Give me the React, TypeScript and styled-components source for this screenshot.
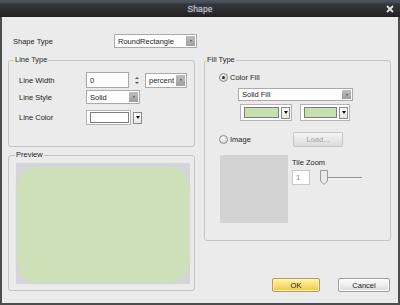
import React from "react";
import styled, { createGlobalStyle } from "styled-components";

const GlobalStyle = createGlobalStyle`
    html, body {
        margin: 0;
        padding: 0;
        background: #ebebeb;
    }
    body {
        font-family: "Liberation Sans", Arial, sans-serif;
        font-size: 7.5px;
        color: #1e1e1e;
    }
`;

const Window = styled.div`
    width: 400px;
    height: 305px;
    display: flex;
    flex-direction: column;
    background: #ebebeb;
`;

const TitleBar = styled.div`
    height: 17px;
    flex: none;
    display: grid;
    grid-template-columns: 1fr auto 1fr;
    align-items: center;
    background: linear-gradient(#4f5460 0, #444852 3px, #34363b 4px, #222224 100%);
`;
const Title = styled.div`
    grid-column: 2;
    font-size: 8.5px;
    color: #d2d8e0;
    letter-spacing: 0.1px;
    text-shadow: 0 0 3px #6c7280;
`;
const CloseButton = styled.div`
    grid-column: 3;
    justify-self: end;
    margin-right: 6px;
    width: 8px;
    height: 8px;
    display: flex;
`;

const Body = styled.div`
    flex: 1;
    box-sizing: border-box;
    border: 2px solid #4d4d4d;
    border-top: none;
    padding: 17px 7px 0 6px;
    display: grid;
    grid-template-columns: 187px 187px;
    grid-template-rows: 14px 1fr;
    column-gap: 9px;
    row-gap: 7px;
`;

const TopRow = styled.div`
    grid-column: 1 / span 2;
    display: flex;
    align-items: center;
`;
const TopLabel = styled.div`
    width: 101px;
    padding-left: 5px;
`;

const Column = styled.div`
    display: flex;
    flex-direction: column;
    gap: 3px;
    min-height: 0;
`;

const GroupBox = styled.fieldset<{ $height: number; $pad: string }>`
    margin: 0;
    min-width: 0;
    box-sizing: border-box;
    height: ${p => p.$height}px;
    border: 1px solid #c4c4c4;
    border-radius: 3px;
    padding: ${p => p.$pad};
`;
const Legend = styled.legend<{ $shift: number }>`
    padding: 0 1px;
    margin-left: ${p => p.$shift}px;
    line-height: 10px;
    font-size: 7.5px;
    color: #1e1e1e;
`;

const FormRow = styled.div<{ $h: number; $top?: number }>`
    display: flex;
    align-items: center;
    height: ${p => p.$h}px;
    margin-top: ${p => p.$top || 0}px;
`;
const FormLabel = styled.div`
    width: 67px;
    flex: none;
`;

const TextBox = styled.div<{ $w: number; $h: number; $muted?: boolean }>`
    box-sizing: border-box;
    width: ${p => p.$w}px;
    height: ${p => p.$h}px;
    background: #fff;
    border: 1px solid ${p => (p.$muted ? "#c8c8c8" : "#a9a9a9")};
    padding-left: 3px;
    display: flex;
    align-items: center;
    color: ${p => (p.$muted ? "#8a8a8a" : "#1e1e1e")};
`;

const Spinner = styled.div`
    width: 16px;
    height: 15px;
    display: flex;
    flex-direction: column;
    align-items: center;
    justify-content: center;
    gap: 3px;
`;
const SpinArrow = styled.div<{ $up?: boolean }>`
    width: 0;
    height: 0;
    border-left: 2px solid transparent;
    border-right: 2px solid transparent;
    ${p => (p.$up ? "border-bottom: 2px solid #555;" : "border-top: 2px solid #555;")}
`;

const ComboBox = styled.div<{ $w: number; $h: number }>`
    box-sizing: border-box;
    width: ${p => p.$w}px;
    height: ${p => p.$h}px;
    background: #fff;
    border: 1px solid #aaaaaa;
    display: flex;
    align-items: stretch;
    padding: 1px;
`;
const ComboText = styled.div`
    flex: 1;
    padding-left: 2px;
    display: flex;
    align-items: center;
    white-space: nowrap;
    overflow: hidden;
`;
const ComboButton = styled.div`
    width: 9px;
    flex: none;
    background: linear-gradient(#bdbdbd, #9f9f9f);
    display: flex;
    align-items: center;
    justify-content: center;
`;
const TinyArrow = styled.div`
    width: 0;
    height: 0;
    border-left: 1.5px solid transparent;
    border-right: 1.5px solid transparent;
    border-top: 2px solid #555;
`;

const ColorFrame = styled.div<{ $w: number; $h: number }>`
    box-sizing: border-box;
    width: ${p => p.$w}px;
    height: ${p => p.$h}px;
    background: #fff;
    border: 1px solid #b4b4b4;
    display: flex;
    align-items: center;
    gap: 2px;
    padding: 0 1px 0 3px;
`;
const Swatch = styled.div<{ $color: string }>`
    flex: 1;
    height: 9px;
    background: ${p => p.$color};
    border: 1px solid #7c7c7c;
`;
const DropButton = styled.div`
    box-sizing: border-box;
    width: 9px;
    height: 12px;
    flex: none;
    background: linear-gradient(#ffffff, #e6e6e6);
    border: 1px solid #8a8a8a;
    display: flex;
    align-items: center;
    justify-content: center;
`;
const BlackArrow = styled.div`
    width: 0;
    height: 0;
    border-left: 2.5px solid transparent;
    border-right: 2.5px solid transparent;
    border-top: 3px solid #111;
`;

const PreviewCanvas = styled.div`
    width: 174px;
    height: 121px;
    background: #d5d4da;
    display: flex;
    padding: 4px 1px 1px 1px;
    box-sizing: border-box;
`;
const PreviewShape = styled.div`
    flex: 1;
    background: #cde0b8;
    border-radius: 20px;
    filter: blur(1.5px);
`;

const RadioRow = styled.div<{ $h: number }>`
    display: flex;
    align-items: center;
    gap: 2px;
    height: ${p => p.$h}px;
`;
const RadioCircle = styled.div<{ $checked?: boolean }>`
    box-sizing: border-box;
    width: 9px;
    height: 9px;
    border-radius: 50%;
    border: 1px solid #8c8c8c;
    background: radial-gradient(circle at 40% 35%, #fafafa, #c9c9c9);
    display: flex;
    align-items: center;
    justify-content: center;
    &::after {
        content: "";
        display: ${p => (p.$checked ? "block" : "none")};
        width: 3px;
        height: 3px;
        border-radius: 50%;
        background: #2a2a2a;
    }
`;

const Indented = styled.div<{ $left: number; $top: number }>`
    margin-left: ${p => p.$left}px;
    margin-top: ${p => p.$top}px;
    display: flex;
    align-items: center;
`;
const ColorRow = styled(Indented)`
    gap: 8px;
    height: 17px;
`;

const ImageRow = styled.div`
    margin-top: 11px;
    display: grid;
    grid-template-columns: 74px auto;
    align-items: center;
    height: 15px;
`;

const LoadButton = styled.div`
    box-sizing: border-box;
    width: 50px;
    height: 15px;
    border: 1px solid #c6c6c6;
    border-radius: 2px;
    background: linear-gradient(#f4f4f4, #dcdcdc);
    color: #a3a3a3;
    display: flex;
    align-items: center;
    justify-content: center;
`;

const TileArea = styled.div`
    margin-top: 8px;
    margin-left: 1px;
    display: flex;
    gap: 4px;
`;
const ImageBox = styled.div`
    width: 68px;
    height: 68px;
    background: #d3d3d3;
`;
const TileControls = styled.div`
    display: flex;
    flex-direction: column;
`;
const TileLabel = styled.div`
    margin-top: 2px;
    height: 11px;
    display: flex;
    align-items: center;
`;
const SliderRow = styled.div`
    margin-top: 2px;
    display: flex;
    align-items: center;
    height: 15px;
`;
const SliderTrack = styled.div`
    width: 34px;
    height: 1px;
    background: #8f8f8f;
    border-bottom: 1px solid #f8f8f8;
`;

const ButtonRow = styled.div`
    margin-top: auto;
    margin-bottom: 11px;
    padding-right: 1px;
    display: flex;
    justify-content: flex-end;
    gap: 18px;
`;
const DialogButton = styled.div<{ $w: number; $primary?: boolean }>`
    box-sizing: border-box;
    width: ${p => p.$w}px;
    height: 14px;
    border-radius: 2px;
    display: flex;
    align-items: center;
    justify-content: center;
    border: 1px solid ${p => (p.$primary ? "#c29a3a" : "#9c9c9c")};
    background: ${p =>
        p.$primary
            ? "linear-gradient(#fff3b8 0%, #fbe07a 45%, #f4c444 100%)"
            : "linear-gradient(#fcfcfc 0%, #eeeeee 50%, #d9d9d9 100%)"};
    box-shadow: inset 0 0 0 1px ${p => (p.$primary ? "#fff6cf" : "#ffffff")};
`;

const Combo = ({ w, h, text }: { w: number; h: number; text: string }) => (
    <ComboBox $w={w} $h={h}>
        <ComboText>{text}</ComboText>
        <ComboButton><TinyArrow /></ComboButton>
    </ComboBox>
);

export default function App() {
    return (
        <Window>
            <GlobalStyle />
            <TitleBar>
                <Title>Shape</Title>
                <CloseButton>
                    <svg width="8" height="8" viewBox="0 0 8 8">
                        <path d="M1 1L7 7M7 1L1 7" stroke="#e2e2e2" strokeWidth="1.8" />
                    </svg>
                </CloseButton>
            </TitleBar>
            <Body>
                <TopRow>
                    <TopLabel>Shape Type</TopLabel>
                    <Combo w={83} h={14} text="RoundRectangle" />
                </TopRow>

                <Column>
                    <GroupBox $height={92} $pad="7px 6px 4px 10px">
                        <Legend $shift={-5}>Line Type</Legend>
                        <FormRow $h={16}>
                            <FormLabel>Line Width</FormLabel>
                            <TextBox $w={43} $h={16}>0</TextBox>
                            <Spinner><SpinArrow $up /><SpinArrow /></Spinner>
                            <Combo w={42} h={15} text="percent" />
                        </FormRow>
                        <FormRow $h={14} $top={2}>
                            <FormLabel>Line Style</FormLabel>
                            <Combo w={54} h={14} text="Solid" />
                        </FormRow>
                        <FormRow $h={15} $top={6}>
                            <FormLabel>Line Color</FormLabel>
                            <ColorFrame $w={45} $h={15}>
                                <Swatch $color="#ffffff" />
                            </ColorFrame>
                            <DropButton style={{ marginLeft: 2 }}><BlackArrow /></DropButton>
                        </FormRow>
                    </GroupBox>

                    <GroupBox $height={141} $pad="3px 4px 4px 7px">
                        <Legend $shift={-1}>Preview</Legend>
                        <PreviewCanvas>
                            <PreviewShape />
                        </PreviewCanvas>
                    </GroupBox>
                </Column>

                <Column>
                    <GroupBox $height={186} $pad="7px 6px 4px 14px">
                        <Legend $shift={-13}>Fill Type</Legend>
                        <RadioRow $h={10}>
                            <RadioCircle $checked />
                            <span>Color Fill</span>
                        </RadioRow>
                        <Indented $left={19} $top={6}>
                            <Combo w={115} h={13} text="Solid Fill" />
                        </Indented>
                        <ColorRow $left={21} $top={3}>
                            <ColorFrame $w={52} $h={17}>
                                <Swatch $color="#c6e0b1" />
                                <DropButton><BlackArrow /></DropButton>
                            </ColorFrame>
                            <ColorFrame $w={50} $h={17}>
                                <Swatch $color="#c6e0b1" />
                                <DropButton><BlackArrow /></DropButton>
                            </ColorFrame>
                        </ColorRow>
                        <ImageRow>
                            <RadioRow $h={15}>
                                <RadioCircle />
                                <span>Image</span>
                            </RadioRow>
                            <LoadButton>Load...</LoadButton>
                        </ImageRow>
                        <TileArea>
                            <ImageBox />
                            <TileControls>
                                <TileLabel>Tile Zoom</TileLabel>
                                <SliderRow>
                                    <TextBox $w={18} $h={15} $muted>1</TextBox>
                                    <svg width="8" height="15" viewBox="0 0 8 15" style={{ marginLeft: 10 }}>
                                        <path d="M0.5 0.5H7.5V11L4 14.5L0.5 11Z" fill="#e9e9e9" stroke="#9a9a9a" />
                                    </svg>
                                    <SliderTrack />
                                </SliderRow>
                            </TileControls>
                        </TileArea>
                    </GroupBox>
                    <ButtonRow>
                        <DialogButton $w={48} $primary>OK</DialogButton>
                        <DialogButton $w={52}>Cancel</DialogButton>
                    </ButtonRow>
                </Column>
            </Body>
        </Window>
    );
}
